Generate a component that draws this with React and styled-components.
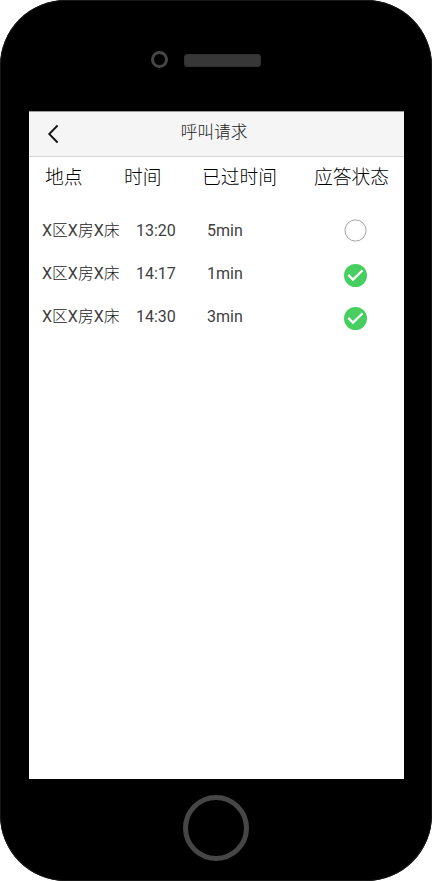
import React from "react";
import styled, { createGlobalStyle } from "styled-components";

const GlobalStyle = createGlobalStyle`
  * { box-sizing: border-box; }
  body { margin: 0; background: #fff; }
`;

const Phone = styled.main`
  width: 432px;
  height: 881px;
  padding: 0 28px 0 29px;
  display: flex;
  flex-direction: column;
  background: #000;
  border-radius: 66px;
  box-shadow: inset 0 0 0 1px #171717;
  font-family: Roboto, "Noto Sans CJK SC", sans-serif;
`;

const Earpiece = styled.div`
  height: 111px;
  padding: 51px 0 0 122px;
  display: flex;
  align-items: flex-start;
  gap: 16px;
`;

const Camera = styled.span`
  width: 17px;
  height: 17px;
  border: 3px solid #464646;
  border-radius: 50%;
`;

const Speaker = styled.span`
  width: 77px;
  height: 13px;
  margin-top: 3px;
  background: #373737;
  border: 1px solid #303030;
  border-radius: 3px;
`;

const Screen = styled.section`
  height: 668px;
  background: #fff;
`;

const NavBar = styled.header`
  height: 46px;
  display: grid;
  grid-template-columns: 60px 1fr 60px;
  align-items: center;
  background: #f5f5f5;
  border-top: 1px solid #999;
  border-bottom: 1px solid #d4d4d4;
`;

const BackButton = styled.button`
  height: 44px;
  padding: 0 0 0 18px;
  border: 0;
  background: none;
  display: flex;
  align-items: center;
`;

const Title = styled.h1`
  margin: 0;
  padding-right: 5px;
  text-align: center;
  font-size: 16.7px;
  line-height: 38px;
  height: 44px;
  font-weight: 300;
  font-family: "Noto Sans CJK SC", sans-serif;
  color: #222;
`;

const Columns = styled.div`
  display: grid;
  grid-template-columns: 79px 78px 112px 1fr;
  height: 40px;
  padding-left: 16px;
  font-family: "Noto Sans CJK SC", sans-serif;
  font-size: 18.8px;
  font-weight: 300;
  line-height: 38px;
  color: #000;
  white-space: nowrap;
`;

const CallList = styled.ul`
  list-style: none;
  margin: 12px 0 0;
  padding: 0;
`;

const CallRow = styled.li`
  height: 43px;
  padding-left: 13px;
  display: grid;
  grid-template-columns: 94px 71px 136px 1fr;
  align-items: center;
  font-size: 16px;
  line-height: 42px;
  color: #404040;
  white-space: nowrap;
`;

const Place = styled.span`
  height: 43px;
  line-height: 41px;
`;

const Han = styled.span`
  font-family: "Noto Sans CJK SC", sans-serif;
  font-weight: 300;
  font-size: 15.8px;
  color: #222;
`;

const StatusIcon = styled.svg`
  display: block;
  width: 25px;
  height: 25px;
  margin-top: ${(p) => (p.$done ? "4px" : "1px")};
  margin-bottom: 1px;
`;

const HomeArea = styled.footer`
  height: 102px;
  padding-top: 16px;
  padding-right: 1px;
  display: flex;
  justify-content: center;
`;

const HomeButton = styled.span`
  width: 66px;
  height: 66px;
  border: 5px solid #464646;
  border-radius: 50%;
`;

const calls = [
  { time: "13:20", elapsed: "5min", done: false },
  { time: "14:17", elapsed: "1min", done: true },
  { time: "14:30", elapsed: "3min", done: true },
];

function Status({ done }) {
  return (
    <StatusIcon $done={done} viewBox="0 0 25 25" fill="none">
      {done ? (
        <>
          <circle cx="12.5" cy="12.5" r="11.5" fill="#46cf60" />
          <path d="m5.3 11.9 4.7 4.7 9.6-9.3" stroke="#fff" strokeWidth="2.2" />
        </>
      ) : (
        <circle cx="12.5" cy="12.5" r="10.6" stroke="#a3a3a8" strokeWidth="1" />
      )}
    </StatusIcon>
  );
}

export default function App() {
  return (
    <>
      <GlobalStyle />
      <Phone>
        <Earpiece>
          <Camera />
          <Speaker />
        </Earpiece>
        <Screen>
          <NavBar>
            <BackButton aria-label="返回">
              <svg width="13" height="20" viewBox="0 0 13 20" fill="none">
                <path d="M10.6 1.5 2.2 10l8.4 8.5" stroke="#111" strokeWidth="1.8" />
              </svg>
            </BackButton>
            <Title>呼叫请求</Title>
          </NavBar>
          <Columns>
            <span>地点</span>
            <span>时间</span>
            <span>已过时间</span>
            <span>应答状态</span>
          </Columns>
          <CallList>
            {calls.map((c) => (
              <CallRow key={c.time}>
                <Place>
                  X<Han>区</Han>X<Han>房</Han>X<Han>床</Han>
                </Place>
                <span>{c.time}</span>
                <span>{c.elapsed}</span>
                <Status done={c.done} />
              </CallRow>
            ))}
          </CallList>
        </Screen>
        <HomeArea>
          <HomeButton />
        </HomeArea>
      </Phone>
    </>
  );
}
